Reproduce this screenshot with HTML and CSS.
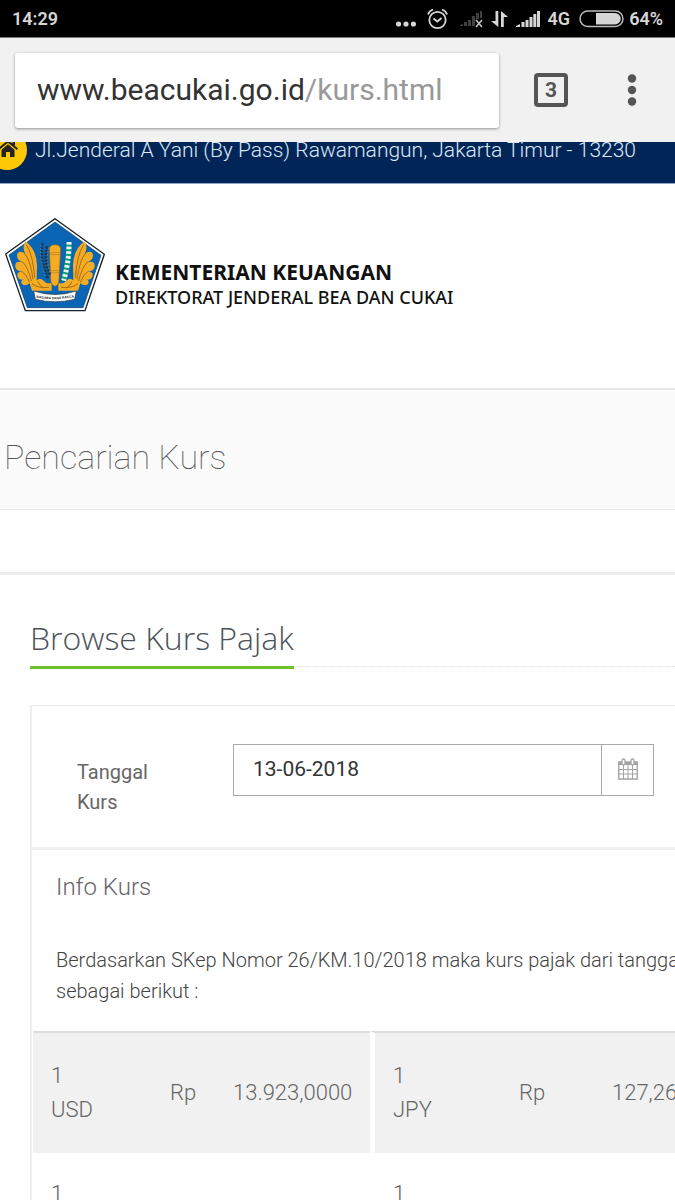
FILE: index.html
```html
<!DOCTYPE html>
<html lang="id">
<head>
<meta charset="utf-8">
<meta name="viewport" content="width=device-width, initial-scale=1">
<title>Pencarian Kurs</title>
<link rel="stylesheet" href="styles.css">
</head>
<body>
<div class="status">
  <span class="clock">14:29</span>
  <div class="status-icons">
    <svg width="20" height="22" viewBox="0 0 20 22"><g fill="#d6d6d6"><circle cx="2.5" cy="16" r="2.600"/><circle cx="10" cy="16" r="2.600"/><circle cx="17.4" cy="16" r="2.600"/></g></svg>
    <svg class="alarm" width="21" height="22" viewBox="0 0 21 22" fill="none" stroke="#d6d6d6" stroke-width="1.8"><circle cx="10.5" cy="12" r="8.2"/><path d="M6.5 10.5l3.8 3 4.2-3.5M1 6.5Q2 3 6 1.5M20 6.5Q19 3 15 1.5"/></svg>
    <svg class="nosim" width="24" height="22" viewBox="0 0 24 22"><path d="M1 18v-1l3-1v2zM5 18v-4h3v4zM9 18v-6h3v6zM13 18V8h3v10zM17 11V5h3v6zM21 10V3h2v7z" fill="#3f3f3f"/><path d="M17 12l6 7M23 12l-6 7" stroke="#c4c4c4" stroke-width="1.6"/></svg>
    <svg class="data" width="17" height="22" viewBox="0 0 17 22" fill="#d6d6d6"><path d="M4.500 3h2.800v16L0 13h4.500zM10 19h2.800V9H17L10 3z"/></svg>
    <svg class="signal" width="24" height="22" viewBox="0 0 24 22" fill="#d6d6d6"><path d="M0 19v-1l4-2v3zM5.500 19v-5h3v5zM9.500 19v-7h3v7zM13.500 19V9h3v10zM17.300 19V6h3v13zM21 19V3h3v16z"/></svg>
    <span>4G</span>
    <svg class="battery" width="45" height="18" viewBox="0 0 45 18"><rect x="1" y="1" width="43" height="15.500" rx="7.700" fill="none" stroke="#bbb" stroke-width="1.500"/><path d="M17 3h19a5.700 5.700 0 0 1 0 11.500H17z" fill="#d6d6d6"/></svg>
    <span>64%</span>
  </div>
</div>

<div class="browser">
  <div class="address"><span>www.beacukai.go.id<span class="path">/kurs.html</span></span></div>
  <button class="tabs" type="button" aria-label="Tab">3</button>
  <button class="more" type="button" aria-label="Menu"><svg width="10" height="32" viewBox="0 0 10 32" fill="#555"><circle cx="5" cy="4.500" r="4.200"/><circle cx="5" cy="16" r="4.200"/><circle cx="5" cy="27.500" r="4.200"/></svg></button>
</div>

<main class="page">
  <div class="topbar">
    <svg class="home" width="40" height="40" viewBox="0 0 40 40"><circle cx="20" cy="20" r="20" fill="#fdc905"/><path d="M21 10l-10 8.500 1.200 1.500 8.800-7.300 8.800 7.300L31 18.500l-3-2.600V11h-2.600v2.500zM14.500 19.800V27H19v-5h4v5h4.500v-7.200L21 14.300z" fill="#232323"/></svg>
    <span class="street">Jl.Jenderal A Yani (By Pass) Rawamangun, Jakarta Timur - 13230</span>
  </div>

  <header class="brand">
    <svg width="100" height="94" viewBox="14 23 300 282">
      <path d="M164 25L312 132 254 301H75L16 131z" fill="#fff" stroke="#15202b" stroke-width="4"/>
      <path d="M164 35L302 135 248 292H81L26 134z" fill="#0b65b5" stroke="#123b68" stroke-width="2"/>
      <g id="wing">
        <path d="M76 93Q64 112 75 129Q52 117 50 135Q50 150 67 156Q43 150 45 169Q48 183 66 184Q47 183 52 199Q57 211 72 207Q58 211 65 221Q75 230 88 219L95 241H154V218Q138 222 130 211Q119 200 109 210L110 165Q109 119 76 93z" fill="#f4ac22"/>
        <path d="M78 103Q98 134 103 202M72 128Q90 148 98 207M66 154Q84 172 93 212M63 182Q78 190 88 216M95 220Q115 235 146 231M113 214q6 13 16 19" fill="none" stroke="#a56b18" stroke-width="3"/>
      </g>
      <use href="#wing" transform="matrix(-1 0 0 1 328 0)"/>
      <path d="M147 116Q148 103 164 103Q180 103 181 116L176 205Q176 225 164 228Q151 225 151 205z" fill="#f4ac22" stroke="#91621d" stroke-width="2"/>
      <path d="M148 127h32M148 133h32M150 181h27M151 187h25" stroke="#b98023" stroke-width="2"/>
      <path d="M126 99Q119 148 143 205M140 108Q130 154 150 195" fill="none" stroke="#173858" stroke-width="8" stroke-dasharray="7 3"/>
      <path d="M121 103Q117 148 136 199M145 112Q135 154 151 191" fill="none" stroke="#b39544" stroke-width="2" stroke-dasharray="5 5"/>
      <path d="M206 95Q207 151 190 211" fill="none" stroke="#159b72" stroke-width="16"/>
      <path d="M206 95Q207 151 190 211" fill="none" stroke="#e8f7e9" stroke-width="15" stroke-dasharray="8 6"/>
      <path d="M100 242Q164 263 228 242L223 267Q164 282 105 267z" fill="#fff" stroke="#263443" stroke-width="2"/>
      <path id="motto" d="M108 262Q164 272 224 260" fill="none"/>
      <text class="motto"><textPath href="#motto">NAGARA DANA RAKCA</textPath></text>
    </svg>
    <div class="names">
      <strong>KEMENTERIAN KEUANGAN</strong>
      <span>DIREKTORAT JENDERAL BEA DAN CUKAI</span>
    </div>
  </header>

  <div class="title"><h1>Pencarian Kurs</h1></div>

  <section class="content">
    <div class="heading"><h2>Browse Kurs Pajak</h2></div>
    <div class="panel">
      <form class="search">
        <label for="tanggal">Tanggal Kurs</label>
        <div class="date">
          <input id="tanggal" type="text" value="13-06-2018">
          <button type="button" aria-label="Pilih tanggal"><svg width="20" height="22" viewBox="0 0 20 22" fill="none" stroke="#a3a3a3"><path d="M.8 4h18.400v17H.8z" stroke-width="1.400"/><path d="M1 5.500h18" stroke-width="3"/><path d="M5.500 7v14M10 7v14M14.500 7v14M1 11.500h18M1 16h18"/><rect x="4" y="1" width="3" height="6" rx="1.500" fill="#fff" stroke-width="1.300"/><rect x="13" y="1" width="3" height="6" rx="1.500" fill="#fff" stroke-width="1.300"/></svg></button>
        </div>
      </form>
      <div class="info">
        <h3>Info Kurs</h3>
        <p>Berdasarkan SKep Nomor 26/KM.10/2018 maka kurs pajak dari tanggal<br>sebagai berikut :</p>
      </div>
      <table class="rates">
        <tbody>
          <tr><td class="code">1<br>USD</td><td class="unit">Rp</td><td class="value">13.923,0000</td><td class="code second">1<br>JPY</td><td class="unit">Rp</td><td class="value last">127,26</td></tr>
          <tr><td class="code">1</td><td></td><td></td><td class="code second">1</td><td></td><td></td></tr>
        </tbody>
      </table>
    </div>
  </section>
</main>
</body>
</html>
```
FILE: styles.css
```css
* { box-sizing: border-box; }
body {
  margin: 0;
  height: 100vh;
  overflow: hidden;
  display: flex;
  flex-direction: column;
  background: #fff;
  color: #666;
  font-family: Roboto, "Noto Sans", sans-serif;
  font-size: 20px;
}
h1, h2, h3, p { margin: 0; }
button { font: inherit; border: 0; padding: 0; background: none; }
svg { display: block; flex: none; }

.status {
  flex: none;
  height: 38px;
  padding: 0 12px;
  display: flex;
  align-items: center;
  justify-content: space-between;
  background: #000;
  border-bottom: 1px solid #777;
  color: #d6d6d6;
  font-size: 18px;
  font-weight: 600;
}
.status-icons { display: flex; align-items: center; gap: 8px; }
.alarm { margin-left: 3px; }
.nosim { margin-left: 3px; }
.battery { margin: 0 -3px 0 1px; }

.browser {
  flex: none;
  height: 104px;
  padding: 0 35px 0 15px;
  display: flex;
  align-items: center;
  background: #f1f1f1;
}
.address {
  flex: 1;
  height: 75px;
  padding: 0 22px 2px;
  display: flex;
  align-items: center;
  background: #fff;
  border-radius: 3px;
  box-shadow: 0 1px 3px rgba(0, 0, 0, .4);
  color: #333;
  font-size: 30px;
}
.path { color: #999; }
.tabs {
  width: 34px;
  height: 34px;
  margin: 0 56px 0 35px;
  border: 4px solid #555;
  border-radius: 4px;
  color: #555;
  font-size: 21px;
  font-weight: 700;
  line-height: 26px;
}
.more { padding: 0 3px; }

.page { flex: 1; overflow: hidden; }
.topbar {
  height: 42px;
  display: flex;
  overflow: hidden;
  background: #012557;
  border-bottom: 1px solid #8ba3c4;
  color: #dce8f6;
  font-size: 21px;
  font-weight: 350;
  line-height: 26px;
  white-space: nowrap;
}
.home { margin: -12px 8px 0 -13px; }
.street { margin-top: -5px; }

.brand {
  height: 204px;
  padding: 34px 5px 0;
  display: flex;
  gap: 10px;
}
.motto { font: 700 10px "Liberation Sans", sans-serif; fill: #222; }
.names {
  padding-top: 42px;
  display: flex;
  flex-direction: column;
  color: #111;
  font-family: "Noto Sans", sans-serif;
  font-size: 18px;
  font-weight: 500;
  line-height: 25px;
  white-space: nowrap;
}
.names strong { font-size: 21px; font-weight: 700; }

.title {
  height: 122px;
  padding: 0 4px;
  display: flex;
  align-items: center;
  background: #fbfbfb;
  border-top: 2px solid #e6e6e6;
  border-bottom: 1px solid #ebebeb;
}
.title h1 { padding-top: 14px; color: #555; font-size: 34px; font-weight: 250; line-height: 40px; }

.content {
  margin-top: 62px;
  padding: 40px 0 0 30px;
  border-top: 3px solid #ececec;
}
.heading {
  height: 52px;
  display: flex;
  border-bottom: 1px dotted #ddd;
}
.heading h2 {
  height: 54px;
  border-bottom: 3px solid #72bf2c;
  color: #4b525c;
  font-family: "Open Sans", "Noto Sans", sans-serif;
  font-size: 32px;
  font-weight: 350;
  line-height: 46px;
  white-space: nowrap;
}

.panel {
  margin: 38px -50px 0 0;
  border: 1px solid #ebebeb;
  border-left: 2px solid #f0f0f0;
  border-right: 0;
}
.search {
  height: 144px;
  padding: 38px 71px 0 45px;
  display: flex;
  border-bottom: 3px solid #f0f0f0;
}
.search label { width: 156px; padding: 13px 60px 0 0; line-height: 30px; }
.date { flex: 1; height: 52px; display: flex; border: 1px solid #aaa; }
.date input {
  flex: 1;
  min-width: 0;
  padding: 0 19px 3px;
  border: 0;
  background: none;
  color: #333;
  font: inherit;
  font-size: 21px;
}
.date button {
  width: 52px;
  padding-bottom: 3px;
  display: flex;
  align-items: center;
  justify-content: center;
  border-left: 1px solid #aaa;
}
.info { height: 181px; padding: 20px 24px 0; white-space: nowrap; }
.info h3 { font-size: 24px; font-weight: 300; line-height: 34px; }
.info p { padding-top: 41px; font-weight: 350; line-height: 31px; color: #444; }

.rates {
  width: 100%;
  border-spacing: 0;
  border-left: 1px solid #fff;
  table-layout: fixed;
  font-size: 22px;
  font-weight: 300;
  line-height: 34px;
  color: #666;
}
.rates td { height: 119px; padding: 0; border-bottom: 2px solid #fff; }
.rates tr:first-child td { height: 124px; background: #f1f1f1; border-top: 2px solid #ddd; }
.rates td.code { width: 137px; padding-left: 18px; }
.rates td.second { width: 149px; border-left: 5px solid #fff; }
.rates tr:last-child .code { vertical-align: top; padding-top: 22px; }
.rates .unit { width: 63px; }
.rates .value { width: 137px; }
.rates .second + .unit { width: 93px; }
.rates .last { width: auto; }
```
